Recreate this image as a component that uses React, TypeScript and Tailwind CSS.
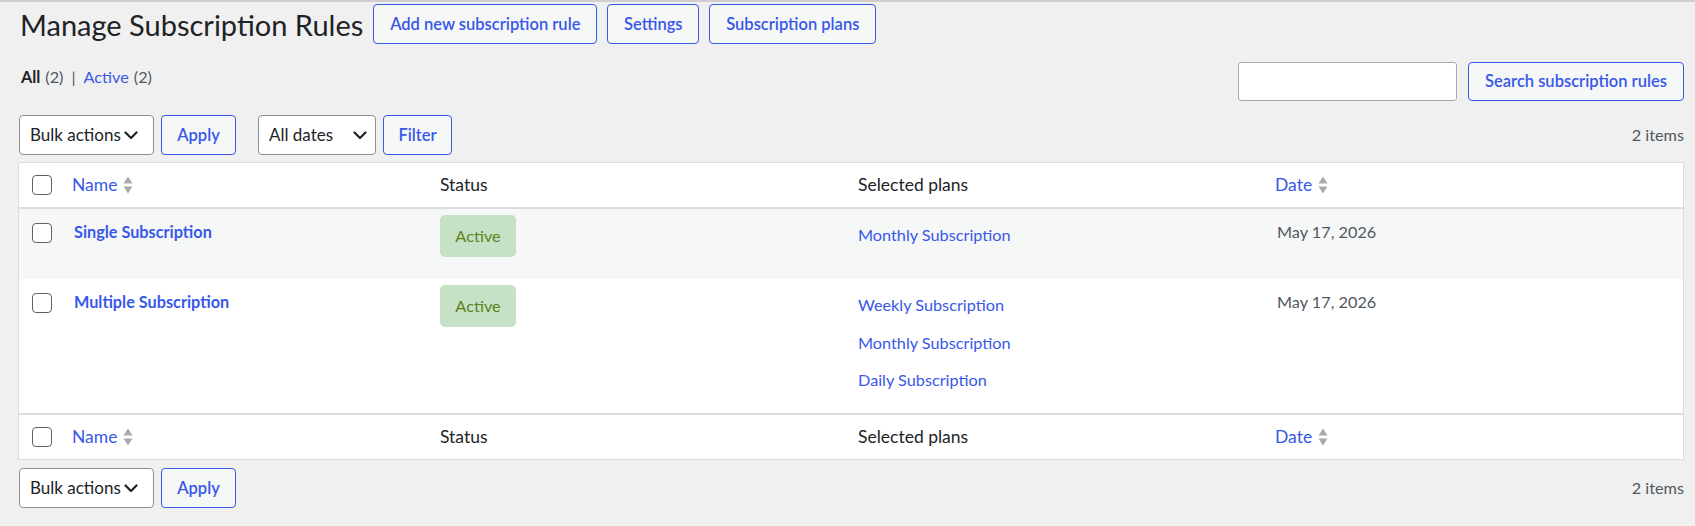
import React from "react";

const BLUE = "text-[#3858e9]";

function Chevron() {
  return (
    <svg width="14" height="9" viewBox="0 0 14 9" fill="none" className="shrink-0">
      <path d="M1.5 1.5 L7 7 L12.5 1.5" stroke="#1d2327" strokeWidth="2.2" strokeLinecap="round" strokeLinejoin="round" />
    </svg>
  );
}

function SortArrows() {
  return (
    <svg width="10" height="18" viewBox="0 0 10 18" className="ml-[6px] shrink-0">
      <path d="M5 0.5 L9.5 7.5 L0.5 7.5 Z" fill="#a7aaad" />
      <path d="M0.5 10.5 L9.5 10.5 L5 17.5 Z" fill="#a7aaad" />
    </svg>
  );
}

function Checkbox() {
  return <span className="block w-[20px] h-[20px] rounded-[4px] border-[1.5px] border-[#5f6368] bg-white" />;
}

function OutlineButton({ label, w }: { label: string; w: string }) {
  return (
    <button
      className={`${w} h-[40px] shrink-0 rounded-[4px] border border-[#3858e9] bg-[#f6f7f7] ${BLUE} text-[16.5px] font-semibold flex items-center justify-center`}
    >
      {label}
    </button>
  );
}

function Select({ label, w, gap }: { label: string; w: string; gap: string }) {
  return (
    <div
      className={`${w} h-[40px] shrink-0 rounded-[4px] border border-[#8c8f94] bg-white flex items-center pl-[10px] ${gap} text-[17px] text-[#1d2327]`}
    >
      <span>{label}</span>
      <Chevron />
    </div>
  );
}

function HeadRow() {
  return (
    <div className="grid grid-cols-[41px_368px_418px_417px_1fr] h-[44px] items-center text-[17.5px] bg-white">
      <div className="pl-[13px]">
        <Checkbox />
      </div>
      <div className="pl-[12px] flex items-center">
        <span className={BLUE}>Name</span>
        <SortArrows />
      </div>
      <div className="pl-[12px] text-[#1d2327]">Status</div>
      <div className="pl-[12px] text-[#1d2327]">Selected plans</div>
      <div className="pl-[12px] flex items-center">
        <span className={BLUE}>Date</span>
        <SortArrows />
      </div>
    </div>
  );
}

function Row({ name, plans, bg, h }: { name: string; plans: string[]; bg: string; h: string }) {
  return (
    <div className={`grid grid-cols-[41px_368px_418px_417px_1fr] ${h} ${bg} text-[16.25px]`}>
      <div className="pl-[13px] pt-[14px]">
        <Checkbox />
      </div>
      <div className={`pl-[14px] pt-[13px] leading-[20px] font-bold ${BLUE}`}>{name}</div>
      <div className="pl-[12px] pt-[6px]">
        <span className="w-[76px] h-[42px] rounded-[5px] bg-[#c6e1c6] text-[#5b841b] flex items-center justify-center">
          Active
        </span>
      </div>
      <div className="pl-[12px] pt-[7px] flex flex-col">
        {plans.map((p) => (
          <span key={p} className={`leading-[37.5px] ${BLUE}`}>
            {p}
          </span>
        ))}
      </div>
      <div className="pl-[14px] pt-[13px] leading-[20px] text-[#50575e]">May 17, 2026</div>
    </div>
  );
}

export default function App() {
  return (
    <div className="min-h-[526px] bg-[#f0f0f1] border-t-2 border-[#cfcfcf] pl-[18px] pr-[11px] font-['Lato','Noto_Sans',sans-serif]">
      <div className="flex items-center h-[40px] mt-[2px]">
        <h1 className="text-[29px] font-normal text-[#1d2327] leading-none ml-[2px] mr-[10px]">Manage Subscription Rules</h1>
        <div className="flex gap-[10px]">
          <OutlineButton label="Add new subscription rule" w="w-[224px]" />
          <OutlineButton label="Settings" w="w-[92px]" />
          <OutlineButton label="Subscription plans" w="w-[167px]" />
        </div>
      </div>

      <div className="flex justify-between items-start mt-[18px]">
        <div className="mt-[5px] leading-[20px] text-[16.25px] pl-[3px] flex items-center">
          <span className="font-bold text-[#1d2327]">All</span>
          <span className="text-[#50575e] ml-[5px]">(2)</span>
          <span className="text-[#50575e] mx-[8px]">|</span>
          <span className={BLUE}>Active</span>
          <span className="text-[#50575e] ml-[5px]">(2)</span>
        </div>
        <div className="flex gap-[11px]">
          <div className="w-[219px] h-[39px] rounded-[3px] border border-[#a7aaad] bg-white" />
          <button className={`w-[216px] h-[39px] rounded-[4px] border border-[#3858e9] bg-[#f6f7f7] ${BLUE} text-[16.5px] font-semibold`}>
            Search subscription rules
          </button>
        </div>
      </div>

      <div className="flex items-center justify-between mt-[14px] pl-[1px]">
        <div className="flex items-center">
          <Select label="Bulk actions" w="w-[135px]" gap="gap-[3px]" />
          <div className="ml-[7px]">
            <OutlineButton label="Apply" w="w-[75px]" />
          </div>
          <div className="ml-[22px]">
            <Select label="All dates" w="w-[118px]" gap="gap-[20px]" />
          </div>
          <div className="ml-[7px]">
            <OutlineButton label="Filter" w="w-[69px]" />
          </div>
        </div>
        <span className="text-[16.25px] text-[#50575e]">2 items</span>
      </div>

      <div className="mt-[7px] border border-[#dcdcde] bg-white">
        <div className="border-b-2 border-[#dcdcde]">
          <HeadRow />
        </div>
        <Row name="Single Subscription" plans={["Monthly Subscription"]} bg="bg-[#f6f7f7]" h="h-[70px]" />
        <Row
          name="Multiple Subscription"
          plans={["Weekly Subscription", "Monthly Subscription", "Daily Subscription"]}
          bg="bg-white"
          h="h-[134px]"
        />
        <div className="border-t-2 border-[#dcdcde]">
          <HeadRow />
        </div>
      </div>

      <div className="flex items-center justify-between mt-[8px] pl-[1px]">
        <div className="flex items-center">
          <Select label="Bulk actions" w="w-[135px]" gap="gap-[3px]" />
          <div className="ml-[7px]">
            <OutlineButton label="Apply" w="w-[75px]" />
          </div>
        </div>
        <span className="text-[16.25px] text-[#50575e]">2 items</span>
      </div>
    </div>
  );
}
